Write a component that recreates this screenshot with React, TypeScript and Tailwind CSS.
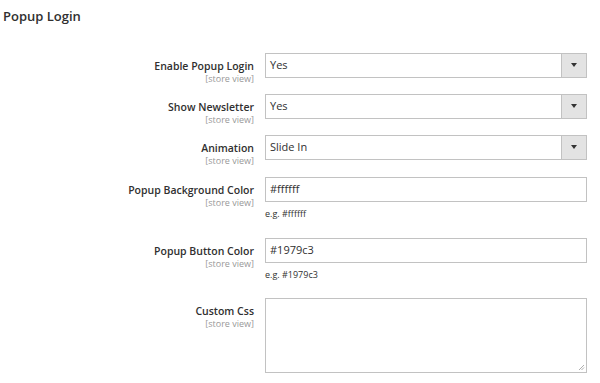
const font = { fontFamily: '"Open Sans", "Noto Sans", sans-serif' };

const Label = ({ text }: { text: string }) => (
  <div className="w-[254px] shrink-0 pt-[8px] text-right leading-none">
    <div className="text-[10.5px] font-semibold text-[#303030]">{text}</div>
    <div className="mt-[3px] text-[9px] text-[#999999]">[store view]</div>
  </div>
);

const Select = ({ value }: { value: string }) => (
  <div className="flex h-[25px] w-[322px] border border-[#c2c2c2] bg-white">
    <div className="flex flex-1 items-center pl-[4px] text-[11px] text-[#303030]">
      {value}
    </div>
    <div className="flex w-[25px] items-center justify-center border-l border-[#c2c2c2] bg-[#e3e3e3]">
      <div className="h-0 w-0 border-x-[3px] border-t-[4px] border-x-transparent border-t-[#333333]" />
    </div>
  </div>
);

const Input = ({ value }: { value: string }) => (
  <div>
    <div className="flex h-[25px] w-[322px] items-center border border-[#c2c2c2] bg-white pl-[4px] text-[11px] text-[#303030]">
      {value}
    </div>
    <div className="mt-[5px] text-[9px] text-[#303030]">e.g. {value}</div>
  </div>
);

export default function App() {
  return (
    <div className="h-[383px] w-[600px] overflow-hidden bg-white" style={font}>
      <h2 className="pl-[3px] pt-[7px] text-[13px] font-semibold text-[#303030]">
        Popup Login
      </h2>

      <div className="mt-[26px] flex flex-col">
        <div className="flex h-[41px] gap-[11px]">
          <Label text="Enable Popup Login" />
          <Select value="Yes" />
        </div>
        <div className="flex h-[41px] gap-[11px]">
          <Label text="Show Newsletter" />
          <Select value="Yes" />
        </div>
        <div className="flex h-[42px] gap-[11px]">
          <Label text="Animation" />
          <Select value="Slide In" />
        </div>
        <div className="flex h-[61px] gap-[11px]">
          <Label text="Popup Background Color" />
          <Input value="#ffffff" />
        </div>
        <div className="flex h-[60px] gap-[11px]">
          <Label text="Popup Button Color" />
          <Input value="#1979c3" />
        </div>
        <div className="flex gap-[11px]">
          <Label text="Custom Css" />
          <div className="relative h-[75px] w-[322px] border border-[#c2c2c2] bg-white">
            <svg className="absolute bottom-[1px] right-[1px]" width="7" height="7" viewBox="0 0 7 7">
              <path d="M6 1L1 6M6 3.5L3.5 6" stroke="#999" strokeWidth="0.8" />
            </svg>
          </div>
        </div>
      </div>
    </div>
  );
}
